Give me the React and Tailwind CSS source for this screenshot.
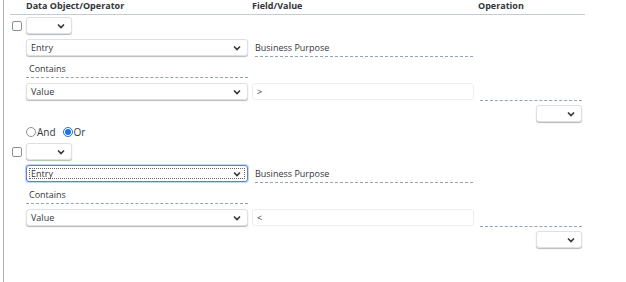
import React from "react";

const Chevron = () => (
  <svg width="8" height="6" viewBox="0 0 8 6" className="shrink-0 relative">
    <polyline points="1,1.5 4,4.5 7,1.5" fill="none" stroke="#32363a" strokeWidth="1.6" />
  </svg>
);

const Select = ({ text, w, focused }) => (
  <div
    className={
      "relative h-[17px] flex items-center justify-between pl-[4px] pr-[6px] bg-white rounded-[3px] " +
      (focused
        ? "border border-[#5a84d2] shadow-[0_0_0_1px_rgba(90,132,210,0.35)]"
        : "border border-[#dde1e5] shadow-[0_1px_1px_rgba(0,0,0,0.28)]")
    }
    style={{ width: w }}
  >
    {focused && (
      <div className="absolute left-[2px] top-[2px] bottom-[2px] right-[2px] border border-dotted border-[#666]" />
    )}
    <span className="relative text-[9px] leading-none text-[#32363a]">{text}</span>
    <Chevron />
  </div>
);

const Block = ({ focused, op }) => (
  <div className="pt-[2px]">
    <div className="flex h-[17px] items-center">
      <div className="w-[16px] pl-[2px] flex items-center">
        <div className="w-[10px] h-[10px] border border-[#8b9095] rounded-[2px] bg-white" />
      </div>
      <Select text="" w={46} />
    </div>
    <div className="flex h-[17px] mt-[5px]">
      <div className="w-[16px]" />
      <div className="w-[226px]">
        <Select text="Entry" w={222} focused={focused} />
      </div>
      <div className="w-[226px] pl-[3px]">
        <div className="w-[218px] h-[18px] flex items-center border-b border-dashed border-[#8fa3bb] text-[9px] text-[#32363a] pt-[1px]">
          Business Purpose
        </div>
      </div>
    </div>
    <div className="flex h-[22px]">
      <div className="w-[16px]" />
      <div className="w-[222px] h-[22px] border-b border-dashed border-[#8fa3bb] flex items-end pb-[2px] pl-[3px] text-[9px] text-[#32363a]">
        Contains
      </div>
    </div>
    <div className="flex h-[17px] mt-[5px]">
      <div className="w-[16px]" />
      <div className="w-[226px]">
        <Select text="Value" w={222} />
      </div>
      <div className="w-[226px]">
        <div className="w-[222px] h-[17px] border border-[#eceef0] rounded-[3px] flex items-center pl-[4px] text-[9px] text-[#32363a] bg-white">
          {op}
        </div>
      </div>
      <div className="w-[106px] pl-[2px]">
        <div className="w-[102px] h-[18px] border-b border-dashed border-[#8fa3bb]" />
      </div>
    </div>
    <div className="flex h-[17px] mt-[5px]">
      <div className="w-[16px]" />
      <div className="w-[226px]" />
      <div className="w-[226px]" />
      <div className="w-[106px] flex justify-end pr-[2px]">
        <Select text="" w={46} />
      </div>
    </div>
  </div>
);

export default function App() {
  return (
    <div
      className="w-[626px] h-[282px] bg-white overflow-hidden"
      style={{ fontFamily: '"Open Sans", "Liberation Sans", sans-serif' }}
    >
      <div className="ml-[3px] h-[282px] border-l border-[#a9b1ba] pl-[6px]">
        <div className="w-[575px] h-[15px] border-b border-[#c3ccd6] flex items-center text-[9px] font-bold text-[#32363a] pb-[2px]">
          <div className="w-[16px]" />
          <div className="w-[226px]">Data Object/Operator</div>
          <div className="w-[226px]">Field/Value</div>
          <div className="w-[106px]">Operation</div>
        </div>
        <Block op=">" />
        <div className="h-[19px] flex items-center pl-[16px] pt-[1px] text-[10px] text-[#32363a]">
          <div className="w-[10px] h-[10px] rounded-full border border-[#8b9095] bg-white" />
          <span className="ml-[1px]">And</span>
          <div className="ml-[7px] w-[10px] h-[10px] rounded-full border border-[#1a73e8] bg-white flex items-center justify-center">
            <div className="w-[6px] h-[6px] rounded-full bg-[#1a73e8]" />
          </div>
          <span className="ml-[1px]">Or</span>
        </div>
        <Block op="<" focused />
      </div>
    </div>
  );
}
